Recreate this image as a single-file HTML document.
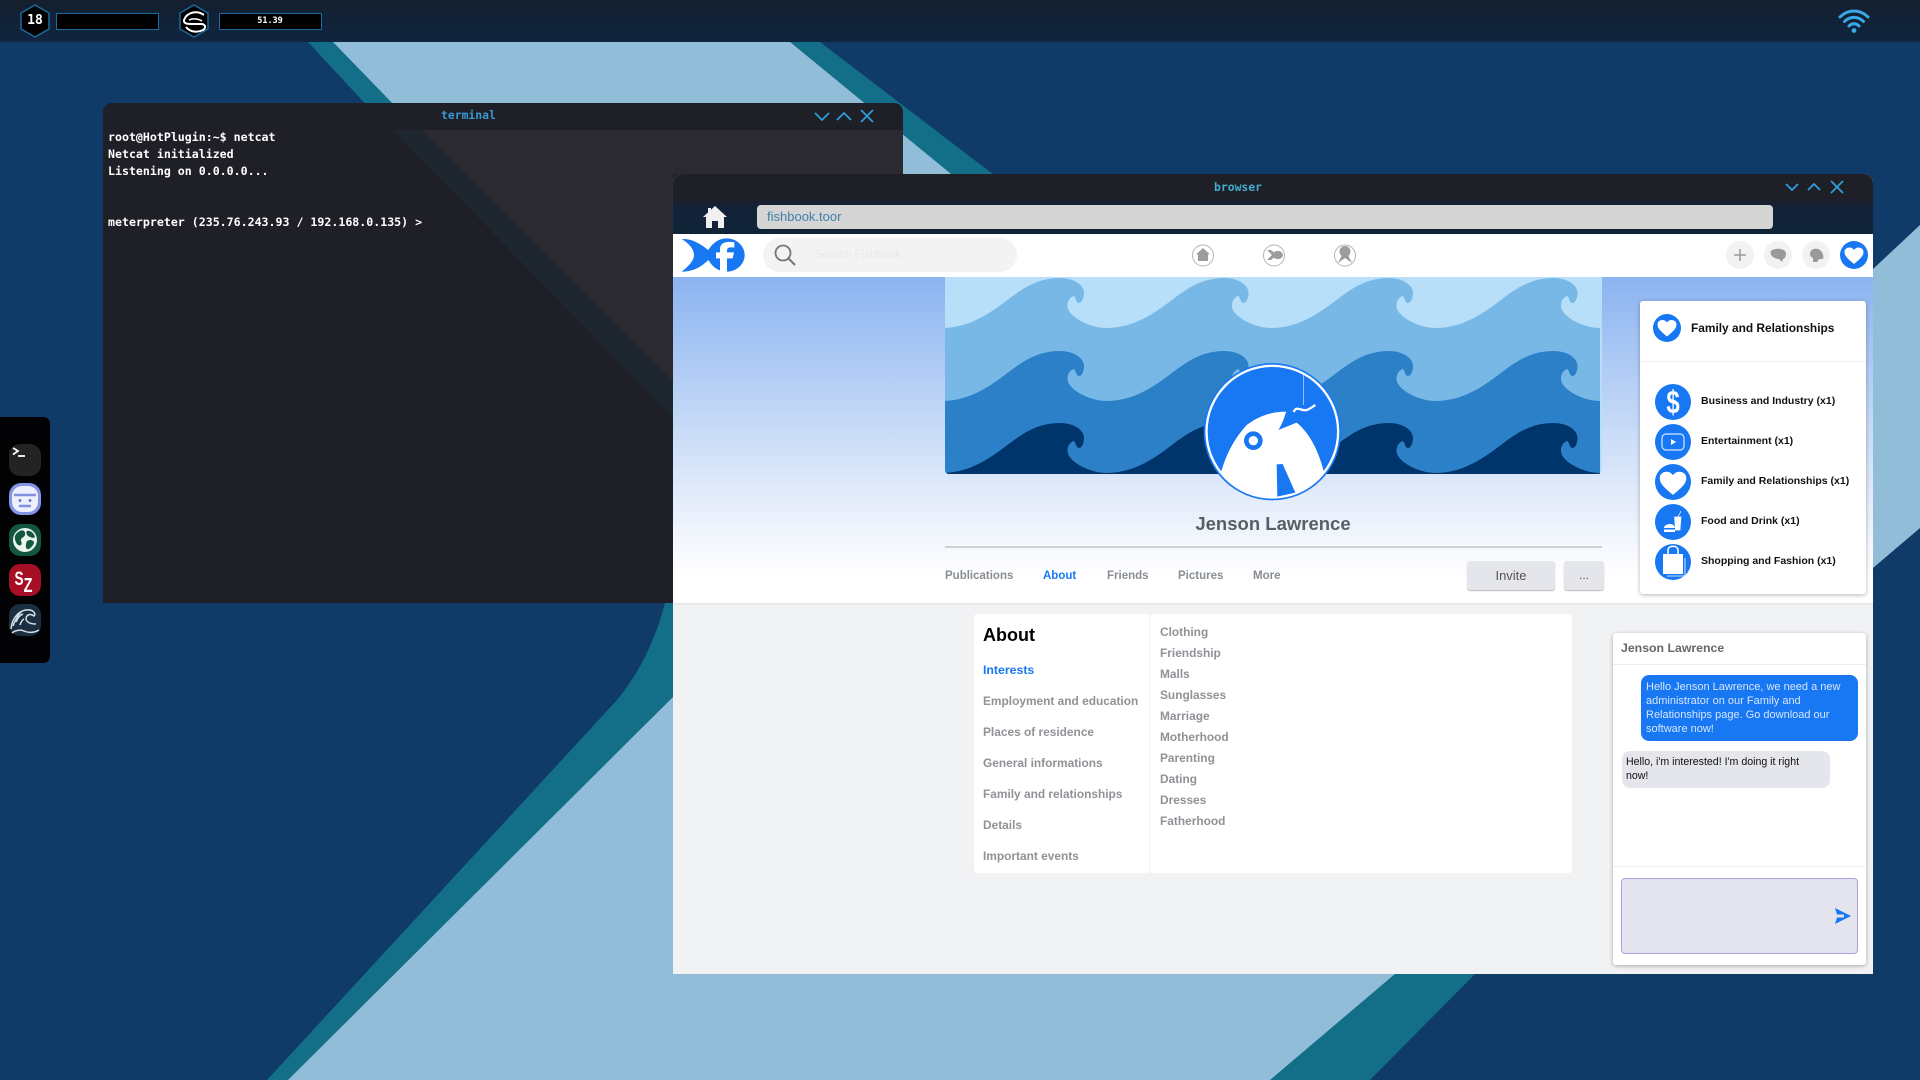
<!DOCTYPE html>
<html><head><meta charset="utf-8"><title>Fishbook</title>
<style>
html,body{margin:0;padding:0;background:#103a68}
body{position:relative;width:1920px;height:1080px;overflow:hidden;font-family:"Liberation Sans",sans-serif}
.a{position:absolute}
.t{position:absolute;white-space:nowrap;line-height:20px;height:20px}
.m{font-family:"DejaVu Sans Mono","Liberation Mono",monospace;font-weight:bold}
.tab{font-size:11.5px;font-weight:bold;color:#8a8d91}
.li{font-size:11.9px;font-weight:bold;color:#8f9296}
.lab{font-size:10.5px;font-weight:bold;color:#111}
svg{position:absolute;overflow:visible}
</style></head><body>
<!-- wallpaper -->
<svg style="left:0;top:0" width="1920" height="1080">
<rect width="1920" height="1080" fill="#103a68"/>
<path d="M308 42L640 400Q700 520 665 603Q650 660 617 700L267 1080H1370L1475 974L1600 800V420L994 175L820 42Z" fill="#126f87"/>
<path d="M333 42L680 400L720 560L673 697L288 1080H1270L1873 568L1920 528V225L1873 269L1300 460L790 42Z" fill="#92bdd9"/>
</svg>
<!-- top bar -->
<div class="a" style="left:0;top:0;width:1920px;height:42px;background:linear-gradient(#141f2e,#0f2540)"></div>
<svg style="left:0;top:0" width="340" height="42">
<polygon points="35,5 49,13 49,29 35,37 21,29 21,13" fill="#000" stroke="#1c6a9f" stroke-width="1.5"/>
<polygon points="194,5 208,13 208,29 194,37 180,29 180,13" fill="#000" stroke="#1c6a9f" stroke-width="1.5"/>
<path d="M204 15C197 10 187 12 184 20C183.500 24 188 24 192 24H202C206 25 206 28 203 30C197 33 190 32 186 27" fill="none" stroke="#fff" stroke-width="2"/>
<path d="M189 20C193 18 199 19 202 21" fill="none" stroke="#fff" stroke-width="1.500"/>
<rect x="56.5" y="13.5" width="102" height="16" fill="#000" stroke="#1c6a9f"/>
<rect x="219.5" y="13.5" width="102" height="16" fill="#000" stroke="#1c6a9f"/>
</svg>
<div class="t m" style="left:21px;width:28px;top:11px;text-align:center;font-size:13px;color:#fff">18</div>
<div class="t m" style="left:240px;width:60px;top:11px;text-align:center;font-size:8.500px;color:#fff">51.39</div>
<svg style="left:1838px;top:8px" width="32" height="26" viewBox="0 0 32 26">
<path d="M2 9C10 1 22 1 30 9M6.500 13.500C12 8 20 8 25.500 13.500M11 18C14 15 18 15 21 18" fill="none" stroke="#3ba7e6" stroke-width="3" stroke-linecap="round"/>
<circle cx="16" cy="22.500" r="2.400" fill="#3ba7e6"/>
</svg>
<!-- dock -->
<div class="a" style="left:0;top:417px;width:50px;height:246px;background:#020204;border-radius:0 7px 7px 0"></div>
<svg style="left:0;top:417px" width="50" height="246">
<rect x="9" y="27" width="32" height="32" rx="11" fill="#232323"/>
<path d="M13 31L18 34L13 37.500" fill="none" stroke="#fff" stroke-width="1.800"/><path d="M18 39H25" stroke="#fff" stroke-width="1.800"/>
<rect x="9" y="66" width="32" height="32" rx="12" fill="#8593e6"/>
<rect x="12" y="69" width="26" height="26" rx="10" fill="#eef0ff"/>
<path d="M14 78H36" stroke="#8290e0" stroke-width="2.500"/><path d="M19 89H31" stroke="#8290e0" stroke-width="2.500"/>
<circle cx="20" cy="83.500" r="1.500" fill="#6a78c8"/><circle cx="30" cy="83.500" r="1.500" fill="#6a78c8"/>
<rect x="9" y="107" width="32" height="32" rx="11" fill="#14573e"/>
<circle cx="25" cy="123" r="12" fill="#eaf5f0"/>
<path d="M17 116C21 112 25 113 25 116C26 121 20 120 21 124C23 128 20 130 17 127C14 122 14 119 17 116ZM27 114C30 113 34 116 35 120C33 122 30 120 28 119C26 117 26 115 27 114ZM27 124C30 122 34 123 34 126C32 131 28 133 27 132C25 130 26 126 27 124Z" fill="#14573e"/>
<rect x="9" y="147" width="32" height="32" rx="11" fill="#a70f24"/>
<text transform="translate(19 168) scale(.8 1.15)" text-anchor="middle" font-family="Liberation Sans" font-weight="bold" font-size="17" fill="#fff">S</text>
<text transform="translate(28 175) scale(.85 1.2)" text-anchor="middle" font-family="Liberation Sans" font-weight="bold" font-size="17" fill="#fff">Z</text>
<rect x="9" y="187" width="32" height="32" rx="11" fill="#1a2f42"/>
<path d="M11 212C12 200 20 192 30 193C34 194 36 197 34 199C30 196 26 198 26 202C27 206 31 207 36 207M12 216C14 214 20 212 24 214C28 216 34 216 39 213M16 205C18 200 20 198 23 197M20 208C21 205 22 203 24 202M13 209C15 204 17 199 21 195" fill="none" stroke="#d8dfe6" stroke-width="1.500"/>
</svg>
<!-- terminal -->
<div class="a" style="left:103px;top:103px;width:800px;height:500px;background:#1f1f27;border-radius:9px 9px 0 0;overflow:hidden"></div>
<svg style="left:0;top:0" width="920" height="610">
<polygon points="393,130 903,130 903,174 673,174 673,418" fill="#1e272f"/>
<polygon points="422,130 903,130 903,174 673,174 673,381" fill="#2a2a30"/>
<g fill="none" stroke="#2f9ed8" stroke-width="1.800">
<path d="M815 113L822 120L829 113M837 120L844 113L851 120M861 110L873 122M873 110L861 122"/>
</g>
</svg>
<div class="t m" style="left:441px;top:105px;font-size:11.400px;color:#3b98cf">terminal</div>
<div class="t m" style="left:108px;top:127px;font-size:11.600px;color:#fff">root@HotPlugin:~$ netcat</div>
<div class="t m" style="left:108px;top:144px;font-size:11.600px;color:#fff">Netcat initialized</div>
<div class="t m" style="left:108px;top:161px;font-size:11.600px;color:#fff">Listening on 0.0.0.0...</div>
<div class="t m" style="left:108px;top:212px;font-size:11.600px;color:#fff">meterpreter (235.76.243.93 / 192.168.0.135) &gt;</div>
<!-- browser -->
<div class="a" style="left:673px;top:174px;width:1200px;height:800px;background:#f1f2f4;border-radius:9px 9px 0 0;overflow:hidden">
  <div class="a" style="left:0;top:0;width:1200px;height:60px;background:linear-gradient(#1f1f27 0,#1f1f27 24px,#12223a 34px,#102438 60px)"></div>
  <div class="a" style="left:0;top:60px;width:1200px;height:43px;background:#fff"></div>
  <div class="a" style="left:0;top:103px;width:1200px;height:326px;background:linear-gradient(#8bb3f1 0,#c3d8f7 140px,#eef3fc 250px,#fff 300px)"></div>
  <div class="a" style="left:0;top:429px;width:1200px;height:2px;background:#e9e9eb"></div>
</div>
<svg style="left:673px;top:174px" width="1200" height="60">
<g fill="none" stroke="#2f9ed8" stroke-width="1.800">
<path d="M1113 10L1119 16L1125 10M1135 16L1141 10L1147 16M1158 7L1170 19M1170 7L1158 19"/>
</g>
</svg>
<div class="t m" style="left:1214px;top:177px;font-size:11.400px;color:#3fb0cf">browser</div>
<svg style="left:700px;top:205px" width="30" height="24" viewBox="0 0 30 24">
<path d="M15 1L27 12H24V23H18V16H12V23H6V12H3L8 7.400V3H11V4.800Z" fill="#f0f0f0"/>
</svg>
<div class="a" style="left:757px;top:205px;width:1016px;height:24px;background:#d5d5d5;border-radius:4px"></div>
<div class="t" style="left:767px;top:207px;font-size:13px;color:#3f80a8">fishbook.toor</div>
<!-- logo -->
<svg style="left:670px;top:170px" width="100" height="110" viewBox="0 0 300 330">
<path d="M35 207C70 205 95 225 115 240C130 215 150 205 170 205C200 205 224 228 224 255C224 282 200 305 170 305C150 305 130 295 115 270C95 290 70 305 35 305C60 285 72 270 72 255C72 240 60 222 35 207Z" fill="#1877f2"/>
<path d="M150 305V265H138V247H150V238C150 220 165 212 193 217V233C178 231 171 233 171 242V247H192L188 265H171V305Z" fill="#fff"/>
</svg>
<div class="a" style="left:763px;top:238px;width:254px;height:34px;background:#f3f3f3;border-radius:17px"></div>
<svg style="left:763px;top:238px" width="40" height="34">
<circle cx="20" cy="15" r="7.500" fill="none" stroke="#777" stroke-width="1.800"/><path d="M25.500 20.500L32 27" stroke="#777" stroke-width="2"/>
</svg>
<div class="t" style="left:815px;top:245px;font-size:11.500px;color:#e8e8e8">Search Fishbook</div>
<!-- nav icons -->
<svg style="left:1181px;top:238px" width="190" height="34">
<g fill="none" stroke="#b4b4b4"><circle cx="22" cy="17.500" r="10.500"/><circle cx="93" cy="17.500" r="10.500"/><circle cx="164" cy="17.500" r="10.500"/></g>
<path d="M22 10L29 16.500H27V23H17V16.500H15Z" fill="#9c9c9c"/>
<path d="M86 12L91 17L86 22L90 22L93 19.500C95 22 101 22 102 17C101 12 95 12 93 14.500L90 12Z" fill="#9c9c9c"/>
<circle cx="164" cy="13.500" r="5.500" fill="#9c9c9c"/><path d="M157 25L161 17H167L171 25L164 20Z" fill="#9c9c9c"/>
</svg>
<svg style="left:1720px;top:238px" width="153" height="34">
<g fill="#f2f2f2"><circle cx="20" cy="17" r="14"/><circle cx="58" cy="17" r="14"/><circle cx="96" cy="17" r="14"/></g>
<path d="M14 17H26M20 11V23" stroke="#9a9a9a" stroke-width="1.500"/>
<path d="M51 13C54 10 62 10 65 13C67 16 66 20 63 21L62 24L59 21C54 21 49 17 51 13Z" fill="#9a9a9a"/>
<path d="M90 16C90 11 96 9 100 12C103 15 104 18 103 21H99L97 24H93V20C91 19 90 18 90 16Z" fill="#9a9a9a"/>
<circle cx="134" cy="17" r="14" fill="#1877f2"/>
<path transform="translate(122 5)" d="M12 21C6 16 2.500 13 2.500 9C2.500 6 5 4.500 7.500 4.500C9.500 4.500 11 5.500 12 7C13 5.500 14.500 4.500 16.500 4.500C19 4.500 21.500 6 21.500 9C21.500 13 18 16 12 21Z" fill="#fff"/>
</svg>
<!-- cover -->
<div class="a" style="left:945px;top:277px;width:657px;height:197px;overflow:hidden;border-radius:0 0 4px 4px;background:#b8dffa">
<svg style="left:0;top:0" width="657" height="197">
<path fill="#78b8e6" d="M-3 51c30 0 52-18 68-30c16-12 30-20 50-20c14 0 24 7 24 15c0 5-2 10-5 10c-3 0-3-5-5-7c-4 1-8 6-6 13c5 11 25 19 38.500 19c30 0 52-18 68-30c16-12 30-20 50-20c14 0 24 7 24 15c0 5-2 10-5 10c-3 0-3-5-5-7c-4 1-8 6-6 13c5 11 25 19 38.500 19c30 0 52-18 68-30c16-12 30-20 50-20c14 0 24 7 24 15c0 5-2 10-5 10c-3 0-3-5-5-7c-4 1-8 6-6 13c5 11 25 19 38.500 19c30 0 52-18 68-30c16-12 30-20 50-20c14 0 24 7 24 15c0 5-2 10-5 10c-3 0-3-5-5-7c-4 1-8 6-6 13c5 11 25 19 38.500 19V300H-3Z"/>
<path fill="#2c80c8" d="M-3 124c30 0 52-18 68-30c16-12 30-20 50-20c14 0 24 7 24 15c0 5-2 10-5 10c-3 0-3-5-5-7c-4 1-8 6-6 13c5 11 25 19 38.500 19c30 0 52-18 68-30c16-12 30-20 50-20c14 0 24 7 24 15c0 5-2 10-5 10c-3 0-3-5-5-7c-4 1-8 6-6 13c5 11 25 19 38.500 19c30 0 52-18 68-30c16-12 30-20 50-20c14 0 24 7 24 15c0 5-2 10-5 10c-3 0-3-5-5-7c-4 1-8 6-6 13c5 11 25 19 38.500 19c30 0 52-18 68-30c16-12 30-20 50-20c14 0 24 7 24 15c0 5-2 10-5 10c-3 0-3-5-5-7c-4 1-8 6-6 13c5 11 25 19 38.500 19V300H-3Z"/>
<path fill="#00356b" d="M-3 196c30 0 52-18 68-30c16-12 30-20 50-20c14 0 24 7 24 15c0 5-2 10-5 10c-3 0-3-5-5-7c-4 1-8 6-6 13c5 11 25 19 38.500 19c30 0 52-18 68-30c16-12 30-20 50-20c14 0 24 7 24 15c0 5-2 10-5 10c-3 0-3-5-5-7c-4 1-8 6-6 13c5 11 25 19 38.500 19c30 0 52-18 68-30c16-12 30-20 50-20c14 0 24 7 24 15c0 5-2 10-5 10c-3 0-3-5-5-7c-4 1-8 6-6 13c5 11 25 19 38.500 19c30 0 52-18 68-30c16-12 30-20 50-20c14 0 24 7 24 15c0 5-2 10-5 10c-3 0-3-5-5-7c-4 1-8 6-6 13c5 11 25 19 38.500 19V300H-3Z"/>
</svg></div>
<!-- avatar -->
<svg style="left:1150px;top:350px" width="240" height="170" viewBox="0 0 720 510">
<defs><clipPath id="c"><circle cx="367" cy="245" r="198"/></clipPath></defs>
<circle cx="367" cy="245" r="206" fill="#1877f2"/>
<circle cx="367" cy="245" r="201" fill="#fff"/>
<circle cx="367" cy="245" r="194" fill="#1877f2"/>
<g clip-path="url(#c)">
<path d="M205 400C218 340 240 280 290 225C330 195 370 185 408 185C405 200 395 225 385 240L440 218C480 250 510 310 525 380L530 470H210Z" fill="#fff"/>
</g>
<circle cx="310" cy="272" r="21" fill="#fff" stroke="#1877f2" stroke-width="14"/>
<path d="M380 343L398 342L436 428L382 440Z" fill="#1877f2"/>
<path d="M460 75V165" stroke="#cfe3ff" stroke-width="2"/>
<path d="M431 186C440 165 455 185 470 180C480 177 488 170 496 165" fill="none" stroke="#fff" stroke-width="7"/>
</svg>
<div class="t" style="left:1123px;width:300px;top:514px;text-align:center;font-size:18.500px;font-weight:bold;color:#5a5f66">Jenson Lawrence</div>
<div class="a" style="left:945px;top:546px;width:657px;height:2px;background:#d0d1d4"></div>
<div class="t tab" style="left:945px;top:566px">Publications</div>
<div class="t tab" style="left:1043px;top:566px;color:#1877f2">About</div>
<div class="t tab" style="left:1107px;top:566px">Friends</div>
<div class="t tab" style="left:1178px;top:566px">Pictures</div>
<div class="t tab" style="left:1253px;top:566px">More</div>
<div class="a" style="left:1467px;top:561px;width:88px;height:29px;background:#e4e6eb;border-radius:3px;box-shadow:0 1px 1px #bbb;text-align:center;font-size:13px;line-height:29px;color:#555">Invite</div>
<div class="a" style="left:1564px;top:561px;width:40px;height:29px;background:#e4e6eb;border-radius:3px;box-shadow:0 1px 1px #bbb;text-align:center;font-size:12px;line-height:29px;color:#555">...</div>
<!-- about -->
<div class="a" style="left:974px;top:614px;width:175px;height:259px;background:#fff;border-radius:3px"></div>
<div class="a" style="left:1150px;top:614px;width:422px;height:259px;background:#fff;border-radius:3px"></div>
<div class="t" style="left:983px;top:625px;font-size:18px;font-weight:bold;color:#000">About</div>
<div class="t li" style="left:983px;top:660px;color:#1877f2;font-size:12.300px">Interests</div>
<div class="t li" style="left:983px;top:691px">Employment and education</div>
<div class="t li" style="left:983px;top:722px">Places of residence</div>
<div class="t li" style="left:983px;top:753px">General informations</div>
<div class="t li" style="left:983px;top:784px">Family and relationships</div>
<div class="t li" style="left:983px;top:815px">Details</div>
<div class="t li" style="left:983px;top:846px">Important events</div>
<div class="t li" style="left:1160px;top:622px">Clothing</div>
<div class="t li" style="left:1160px;top:643px">Friendship</div>
<div class="t li" style="left:1160px;top:664px">Malls</div>
<div class="t li" style="left:1160px;top:685px">Sunglasses</div>
<div class="t li" style="left:1160px;top:706px">Marriage</div>
<div class="t li" style="left:1160px;top:727px">Motherhood</div>
<div class="t li" style="left:1160px;top:748px">Parenting</div>
<div class="t li" style="left:1160px;top:769px">Dating</div>
<div class="t li" style="left:1160px;top:790px">Dresses</div>
<div class="t li" style="left:1160px;top:811px">Fatherhood</div>
<!-- interest card -->
<div class="a" style="left:1640px;top:301px;width:226px;height:293px;background:#fff;border-radius:3px;box-shadow:0 1px 4px rgba(0,0,0,.3)"></div>
<div class="a" style="left:1640px;top:361px;width:226px;height:1px;background:#eceef0"></div>
<svg style="left:1640px;top:300px" width="226" height="293">
<defs><path id="h" d="M12 21C6 16 2.500 13 2.500 9C2.500 6 5 4.500 7.500 4.500C9.500 4.500 11 5.500 12 7C13 5.500 14.500 4.500 16.500 4.500C19 4.500 21.500 6 21.500 9C21.500 13 18 16 12 21Z" fill="#fff"/></defs>
<circle cx="27" cy="28" r="14" fill="#1877f2"/><use href="#h" transform="translate(15 15.500) scale(1)"/>
<g fill="#1877f2"><circle cx="33" cy="102" r="18"/><circle cx="33" cy="142" r="18"/><circle cx="33" cy="182" r="18"/><circle cx="33" cy="222" r="18"/><circle cx="33" cy="262" r="18"/></g>
<text transform="translate(33 113) scale(.75 1)" text-anchor="middle" font-family="Liberation Sans" font-weight="bold" font-size="32" fill="#fff">$</text>
<rect x="22" y="134" width="22" height="16" rx="4" fill="none" stroke="#d7e6ff" stroke-width="1.200"/><path d="M31 139L36 142L31 145Z" fill="#fff"/>
<use href="#h" transform="translate(16.200 165.500) scale(1.400)"/>
<path d="M24 228C24 225 28 224 30 224C33 224 35 226 35 228ZM24 229.500H35V232H24Z" fill="#fff"/>
<path d="M34.500 217H41L40 230H35.500ZM38 217L41 211" fill="#fff" stroke="#fff" stroke-width=".7"/>
<path d="M23 254H43V274H23Z" fill="#fff"/>
<path d="M28 254V250C28 245 38 245 38 250V254" fill="none" stroke="#fff" stroke-width="1.500"/>
<path d="M45 258V276H27" fill="none" stroke="#fff" stroke-width=".8"/>
</svg>
<div class="t" style="left:1691px;top:318px;font-size:11.900px;font-weight:bold;color:#111">Family and Relationships</div>
<div class="t lab" style="left:1701px;top:391px">Business and Industry (x1)</div>
<div class="t lab" style="left:1701px;top:431px">Entertainment (x1)</div>
<div class="t lab" style="left:1701px;top:471px">Family and Relationships (x1)</div>
<div class="t lab" style="left:1701px;top:511px">Food and Drink (x1)</div>
<div class="t lab" style="left:1701px;top:551px">Shopping and Fashion (x1)</div>
<!-- chat -->
<div class="a" style="left:1613px;top:633px;width:253px;height:332px;background:#fff;border-radius:3px;box-shadow:0 1px 4px rgba(0,0,0,.3)"></div>
<div class="a" style="left:1613px;top:664px;width:253px;height:1px;background:#eceef0"></div>
<div class="a" style="left:1613px;top:866px;width:253px;height:1px;background:#eceef0"></div>
<div class="t" style="left:1621px;top:638px;font-size:12.300px;font-weight:bold;color:#65676b">Jenson Lawrence</div>
<div class="a" style="left:1641px;top:675px;width:217px;height:66px;background:#1877f2;border-radius:8px"></div>
<div class="a" style="left:1646px;top:680px;font-size:11px;line-height:14px;color:#d6e6ff;white-space:nowrap">Hello Jenson Lawrence, we need a new<br>administrator on our Family and<br>Relationships page. Go download our<br>software now!</div>
<div class="a" style="left:1622px;top:751px;width:208px;height:37px;background:#e4e6eb;border-radius:8px"></div>
<div class="a" style="left:1626px;top:755px;font-size:10.600px;line-height:14px;color:#111;white-space:nowrap">Hello, i'm interested! I'm doing it right<br>now!</div>
<div class="a" style="left:1621px;top:878px;width:235px;height:74px;background:#e4e4ee;border:1px solid #a9a2e0;border-radius:4px"></div>
<svg style="left:1833px;top:906px" width="20" height="20"><path d="M2 2L18 10L2 18L4 11.500H11V8.500H4Z" fill="#1877f2"/></svg>
</body></html>
